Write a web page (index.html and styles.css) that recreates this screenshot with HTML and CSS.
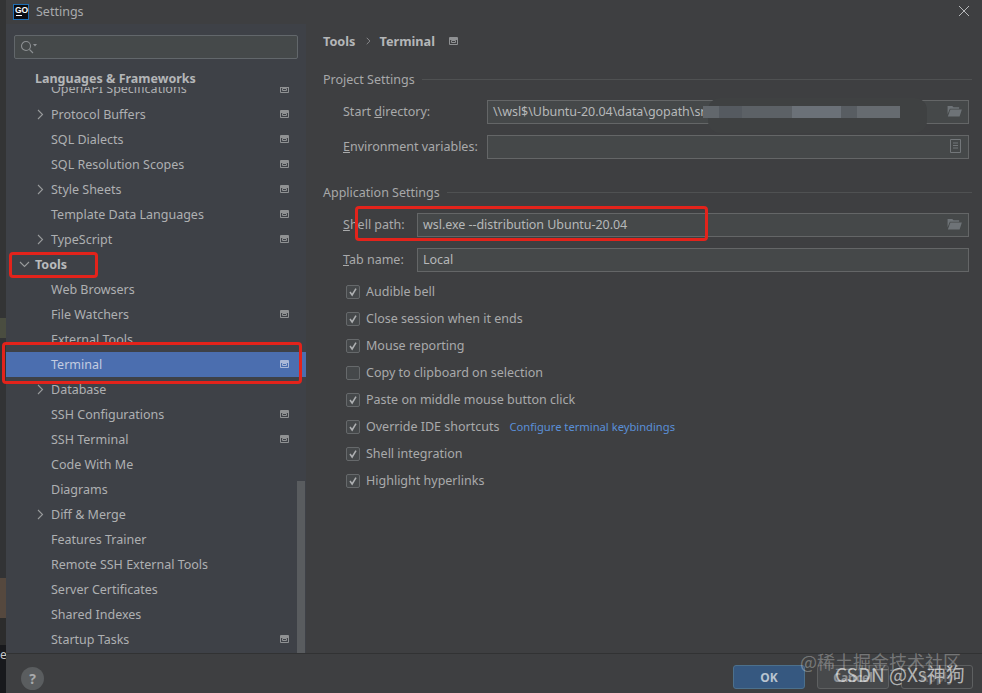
FILE: index.html
```html
<!DOCTYPE html>
<html lang="en">
<head>
<meta charset="utf-8">
<title>Settings</title>
<link rel="stylesheet" href="styles.css">
</head>
<body>
<svg class="defs" width="0" height="0" aria-hidden="true">
  <symbol id="proj" viewBox="0 0 9 8"><path d="M.5 .5h8v7h-8z M2.500 3.500h4v2h-4z" fill="none" stroke="currentColor"/><path d="M1 1h7v2H1z" fill="currentColor"/></symbol>
  <symbol id="chev" viewBox="0 0 7 11"><path d="M1 1l4.500 4.500L1 10" fill="none" stroke="currentColor" stroke-width="1.100"/></symbol>
  <symbol id="folder" viewBox="0 0 16 13"><path d="M.5 1h5l1.500 1.500h6V4H3L.5 10z" fill="currentColor"/><path d="M3.500 5H16l-2.500 7.500H.8z" fill="currentColor"/></symbol>
  <symbol id="tick" viewBox="0 0 14 14"><path d="M3.500 7 6 10.500 10.500 3" fill="none" stroke="currentColor" stroke-width="1.800"/></symbol>
</svg>
<div class="screen">
  <div class="backdrop">
    <div class="bd bd-a"></div>
    <div class="bd bd-b"></div>
    <div class="bd bd-c"></div>
    <div class="bd bd-d"></div>
    <div class="bd bd-e"></div>
    <div class="bd bd-f">e,</div>
  </div>
  <div class="dialog">
    <header class="titlebar">
      <div class="applogo"><span class="applogo-text">GO</span><span class="applogo-bar"></span></div>
      <span class="title">Settings</span>
      <svg class="close" viewBox="0 0 12 12"><path d="M1 1l10 10M11 1 1 11" stroke="currentColor" stroke-width="1" fill="none"/></svg>
    </header>
    <div class="body">
      <aside class="sidebar">
        <div class="search">
          <svg class="search-icon" viewBox="0 0 18 14"><circle cx="6" cy="6" r="4.500" fill="none" stroke="currentColor" stroke-width="1.100"/><path d="M9.500 9.500 13 13" stroke="currentColor" stroke-width="1.100"/><path d="M13 4h4l-2 2.500z" fill="currentColor"/></svg>
        </div>
        <div class="tree-head">Languages &amp; Frameworks</div>
        <div class="tree">
          <div class="row row-cut-top"><span class="row-label">OpenAPI Specifications</span><svg class="proj"><use href="#proj"/></svg></div>
          <div class="row"><svg class="chev"><use href="#chev"/></svg><span class="row-label">Protocol Buffers</span><svg class="proj"><use href="#proj"/></svg></div>
          <div class="row"><span class="row-label">SQL Dialects</span><svg class="proj"><use href="#proj"/></svg></div>
          <div class="row"><span class="row-label">SQL Resolution Scopes</span><svg class="proj"><use href="#proj"/></svg></div>
          <div class="row"><svg class="chev"><use href="#chev"/></svg><span class="row-label">Style Sheets</span><svg class="proj"><use href="#proj"/></svg></div>
          <div class="row"><span class="row-label">Template Data Languages</span><svg class="proj"><use href="#proj"/></svg></div>
          <div class="row"><svg class="chev"><use href="#chev"/></svg><span class="row-label">TypeScript</span><svg class="proj"><use href="#proj"/></svg></div>
          <div class="row row-top"><svg class="chev chev-open"><use href="#chev"/></svg><span class="row-label">Tools</span></div>
          <div class="row"><span class="row-label">Web Browsers</span></div>
          <div class="row"><span class="row-label">File Watchers</span><svg class="proj"><use href="#proj"/></svg></div>
          <div class="row row-cut-bottom"><span class="row-label">External Tools</span></div>
          <div class="row row-selected"><span class="row-label">Terminal</span><svg class="proj"><use href="#proj"/></svg></div>
          <div class="row"><svg class="chev"><use href="#chev"/></svg><span class="row-label">Database</span></div>
          <div class="row"><span class="row-label">SSH Configurations</span><svg class="proj"><use href="#proj"/></svg></div>
          <div class="row"><span class="row-label">SSH Terminal</span><svg class="proj"><use href="#proj"/></svg></div>
          <div class="row"><span class="row-label">Code With Me</span></div>
          <div class="row"><span class="row-label">Diagrams</span></div>
          <div class="row"><svg class="chev"><use href="#chev"/></svg><span class="row-label">Diff &amp; Merge</span></div>
          <div class="row"><span class="row-label">Features Trainer</span></div>
          <div class="row"><span class="row-label">Remote SSH External Tools</span></div>
          <div class="row"><span class="row-label">Server Certificates</span></div>
          <div class="row"><span class="row-label">Shared Indexes</span></div>
          <div class="row"><span class="row-label">Startup Tasks</span><svg class="proj"><use href="#proj"/></svg></div>
        </div>
        <div class="scrollthumb"></div>
      </aside>
      <main class="content">
        <div class="crumbs">
          <span class="crumb">Tools</span>
          <svg class="crumb-sep"><use href="#chev"/></svg>
          <span class="crumb">Terminal</span>
          <svg class="proj crumb-proj"><use href="#proj"/></svg>
        </div>
        <section class="group group-project">
          <div class="group-title"><span>Project Settings</span><i class="rule"></i></div>
          <div class="field">
            <label class="flabel flabel-wide">Start <u>d</u>irectory:</label>
            <div class="input"><span>\\wsl$\Ubuntu-20.04\data\gopath\sr</span><svg class="field-icon"><use href="#folder"/></svg></div>
          </div>
          <div class="field">
            <label class="flabel flabel-wide"><u>E</u>nvironment variables:</label>
            <div class="input"><svg class="doc-icon" viewBox="0 0 11 14"><path d="M.5 .5h10v13H.5z" fill="none" stroke="currentColor"/><path d="M3 4h5M3 6.500h5M3 9h5" stroke="currentColor"/></svg></div>
          </div>
        </section>
        <section class="group group-app">
          <div class="group-title"><span>Application Settings</span><i class="rule"></i></div>
          <div class="field">
            <label class="flabel flabel-narrow"><u>S</u>hell path:</label>
            <div class="input"><span>wsl.exe --distribution Ubuntu-20.04</span><svg class="field-icon"><use href="#folder"/></svg></div>
          </div>
          <div class="field">
            <label class="flabel flabel-narrow"><u>T</u>ab name:</label>
            <div class="input"><span>Local</span></div>
          </div>
          <ul class="checks">
            <li class="check"><span class="box"><svg class="tick"><use href="#tick"/></svg></span>Audible bell</li>
            <li class="check"><span class="box"><svg class="tick"><use href="#tick"/></svg></span>Close session when it ends</li>
            <li class="check"><span class="box"><svg class="tick"><use href="#tick"/></svg></span>Mouse reporting</li>
            <li class="check"><span class="box"></span>Copy to clipboard on selection</li>
            <li class="check"><span class="box"><svg class="tick"><use href="#tick"/></svg></span>Paste on middle mouse button click</li>
            <li class="check"><span class="box"><svg class="tick"><use href="#tick"/></svg></span>Override IDE shortcuts<a class="link">Configure terminal keybindings</a></li>
            <li class="check"><span class="box"><svg class="tick"><use href="#tick"/></svg></span>Shell integration</li>
            <li class="check"><span class="box"><svg class="tick"><use href="#tick"/></svg></span>Highlight hyperlinks</li>
          </ul>
        </section>
      </main>
    </div>
    <footer class="footer">
      <span class="help">?</span>
      <div class="buttons">
        <button class="btn btn-ok">OK</button>
        <button class="btn">Cancel</button>
        <button class="btn btn-off">Apply</button>
      </div>
    </footer>
  </div>
  <div class="blur-patch"></div>
  <div class="blur-strip"></div>
  <div class="mark mark-tools"></div>
  <div class="mark mark-terminal"></div>
  <div class="mark mark-shell"></div>
  <div class="wm wm-juejin">@稀土掘金技术社区</div>
  <div class="wm wm-csdn">CSDN @Xs神狗</div>
</div>
</body>
</html>
```
FILE: styles.css
```css
* { box-sizing: border-box; }
html, body { margin: 0; height: 100%; }
body { font-family: "Noto Sans", "Open Sans", sans-serif; font-size: 12.5px; color: #aeb0b2; background: #2d2d2d; overflow: hidden; }
.defs { position: absolute; }
.screen { position: relative; display: flex; width: 982px; height: 693px; overflow: hidden; }

.backdrop { width: 6px; flex: none; display: flex; flex-direction: column; }
.bd-a { height: 318px; background: #333435; }
.bd-b { height: 20px; background: #4a4d40; }
.bd-c { height: 240px; background: #323335; }
.bd-d { height: 40px; background: #55483e; }
.bd-e { height: 27px; background: #2c2c2c; }
.bd-f { flex: 1; background: #18191c; color: #c8c8c8; font-size: 12px; line-height: 20px; overflow: hidden; white-space: nowrap; }

.dialog { flex: 1; display: flex; flex-direction: column; background: #3e3f41; min-width: 0; }
.titlebar { height: 24px; flex: none; display: flex; align-items: center; padding: 0 7px; gap: 7px; }
.applogo { width: 16px; height: 16px; background: #0b0c10; border: 1px solid #1f6fb5; display: flex; flex-direction: column; padding: 1px 0 0 1px; color: #fff; margin-top: -1px; }
.applogo-text { font: bold 8.500px/8px "Liberation Sans", sans-serif; }
.applogo-bar { width: 6px; height: 1px; background: #fff; margin: 1px 0 0 1px; }
.title { color: #a9abad; margin-top: -1px; }
.close { width: 12px; height: 12px; margin-left: auto; color: #b6b8ba; margin-top: -2px; margin-right: 5px; }

.body { flex: 1; display: flex; min-height: 0; }
.sidebar { width: 300px; flex: none; background: #3e4147; position: relative; display: flex; flex-direction: column; padding-top: 11px; overflow: hidden; }
.search { margin: 0 8px; height: 24px; flex: none; background: #45494a; border: 1px solid #62676b; border-radius: 2px; display: flex; align-items: center; padding-left: 5px; color: #8d9093; }
.search-icon { width: 18px; height: 14px; }
.tree-head { height: 28px; flex: none; padding: 6px 0 0 29px; line-height: 28px; font-weight: 700; color: #b4b6b8; }
.tree { flex: 1; min-height: 0; overflow: hidden; }
.row { height: 25px; line-height: 25px; position: relative; padding-left: 45px; white-space: nowrap; }
.row-cut-top { height: 15px; line-height: 4px; overflow: hidden; }
.row-cut-top .proj { top: -2px; }
.row-cut-bottom { height: 16px; margin-bottom: 9px; overflow: hidden; }
.row-top { padding-left: 29px; font-weight: 700; color: #b9bbbd; }
.row-selected { background: #4b6eaf; color: #c3cce0; }
.row-selected .proj { color: #a9b8d8; }
.proj { position: absolute; right: 17px; top: 8px; width: 9px; height: 8px; color: #8f9193; }
.chev { position: absolute; left: 31px; top: 7px; width: 7px; height: 11px; color: #989a9c; }
.chev-open { left: 15px; top: 7px; transform: rotate(90deg); }
.scrollthumb { position: absolute; right: 1px; top: 457px; bottom: 0; width: 8px; background: #595c5f; }

.content { flex: 1; min-width: 0; padding: 0 10px 0 17px; }
.crumbs { height: 17px; margin-top: 8px; display: flex; align-items: center; }
.crumb { font-weight: 700; font-size: 12.700px; color: #b4b6b8; }
.crumb-sep { width: 5px; height: 8px; margin: 0 8px 0 11px; color: #9a9c9e; }
.crumb-proj { position: static; margin-left: 14px; }
.group-project { margin-top: 20px; }
.group-app { margin-top: 23px; }
.group-title { display: flex; align-items: center; height: 20px; gap: 7px; color: #a7a8a9; }
.rule { flex: 1; height: 1px; background: #4f5152; }
.field { display: flex; align-items: center; height: 24px; margin: 11px 3px 0 20px; }
.flabel { flex: none; color: #a9aaab; padding-bottom: 2px; }
.flabel-wide { width: 144px; }
.flabel-narrow { width: 74px; }
.input { flex: 1; height: 24px; display: flex; align-items: center; padding: 0 5px 2px; background: #454849; border: 1px solid #646667; color: #b6b8b9; min-width: 0; letter-spacing: -.05px; }
.field-icon { width: 15px; height: 12px; margin-left: auto; margin-right: 1px; color: #6e7377; }
.doc-icon { width: 11px; height: 14px; margin-left: auto; margin-right: 2px; color: #73777a; }

.checks { list-style: none; margin: 6px 0 0 23px; padding: 0; }
.check { height: 27px; display: flex; align-items: center; color: #a9aaab; }
.box { width: 14px; height: 14px; flex: none; margin-right: 6px; background: #45484a; border: 1px solid #66696b; border-radius: 2px; display: block; color: #aeb0b2; }
.tick { display: block; width: 12px; height: 12px; }
.link { margin-left: 10px; font-size: 11.200px; color: #5a8fd8; }

.footer { height: 40px; flex: none; border-top: 1px solid #313233; display: flex; align-items: center; padding: 7px 9px 0 15px; }
.help { width: 23px; height: 23px; border-radius: 50%; background: #5a5d5f; color: #a8aaac; font-weight: 700; font-size: 14px; display: flex; align-items: center; justify-content: center; margin-top: 2px; }
.buttons { margin-left: auto; display: flex; gap: 12px; }
.btn { width: 72px; height: 24px; padding: 0; font: 700 12px "Noto Sans", sans-serif; border: 1px solid #5e6061; border-radius: 3px; background: #47494b; color: #8f9193; }
.btn-ok { background: #365880; border-color: #4c708c; color: #b9c4d0; }
.btn-off { background: transparent; color: #626466; }

.blur-patch { position: absolute; left: 708px; top: 98px; width: 219px; height: 35px; background: #3f4142; border-radius: 12px; }
.blur-strip { position: absolute; left: 703px; top: 106px; width: 197px; height: 12px; background: linear-gradient(90deg, #62676c 0 8%, #555a60 8% 20%, #5c6166 20% 45%, #6b7178 45% 70%, #585d62 70% 78%, #666b70 78%); }
.mark { position: absolute; border: 3px solid #e3231b; border-radius: 4px; }
.mark-tools { left: 9px; top: 252px; width: 89px; height: 26px; }
.mark-terminal { left: 2px; top: 342px; width: 300px; height: 42px; }
.mark-shell { left: 355px; top: 206px; width: 353px; height: 35px; }
.wm { position: absolute; white-space: nowrap; font-family: "Noto Sans CJK SC", "Noto Sans", sans-serif; }
.wm-juejin { left: 800px; top: 648px; font-size: 18px; color: rgba(255,255,255,.3); }
.wm-csdn { left: 835px; top: 660px; font-size: 19px; color: rgba(255,255,255,.62); }
```
